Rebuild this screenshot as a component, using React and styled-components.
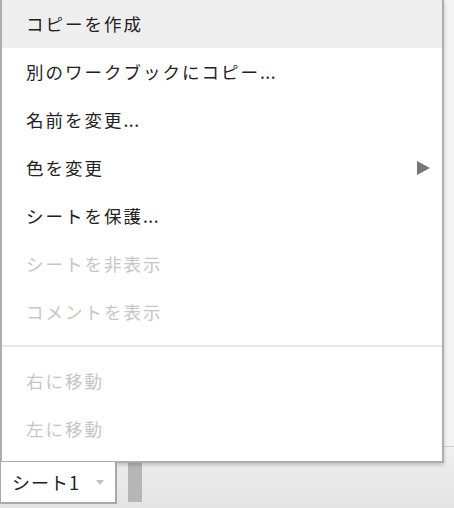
import React from "react";
import styled, { createGlobalStyle } from "styled-components";

const Global = createGlobalStyle`
  html, body { margin: 0; padding: 0; }
  body {
    width: 454px;
    height: 508px;
    overflow: hidden;
    background: #f2f2f2;
    font-family: "Noto Sans CJK JP", "Noto Sans", sans-serif;
  }
`;

const Page = styled.div`
  position: relative;
  width: 454px;
  height: 508px;
  display: flex;
  flex-direction: column;
`;

const Sheet = styled.div`
  flex: 1;
  background: #f3f3f3;
`;

const BottomBar = styled.div`
  height: 62px;
  border-top: 1px solid #cfcfcf;
  background: linear-gradient(#f0f0f0, #e3e3e3);
  display: flex;
  align-items: flex-end;
  gap: 11px;
  padding-bottom: 4px;
  box-sizing: border-box;
`;

const Tab = styled.div`
  position: relative;
  z-index: 3;
  width: 117px;
  height: 42px;
  background: #fff;
  border: 2px solid #a9a9a9;
  border-top: none;
  border-left-width: 1px;
  display: flex;
  align-items: center;
  padding-left: 11px;
  box-sizing: border-box;
  font-size: 18px;
  letter-spacing: 1px;
  color: #222;
  gap: 16px;
`;

const TabArrow = styled.span`
  width: 0;
  height: 0;
  border-left: 4px solid transparent;
  border-right: 4px solid transparent;
  border-top: 5px solid #c2c2c2;
`;

const Thumb = styled.div`
  width: 14px;
  height: 39px;
  margin-bottom: 2px;
  background: #b6b6b6;
`;

const Menu = styled.div`
  position: absolute;
  z-index: 2;
  left: 0;
  top: 0;
  width: 444px;
  box-sizing: border-box;
  background: #fff;
  border: 2px solid #adadad;
  border-top: none;
  box-shadow: 0 2px 4px rgba(0, 0, 0, 0.2);
  padding-bottom: 8px;
`;

const Item = styled.div`
  height: 48px;
  display: flex;
  align-items: center;
  justify-content: space-between;
  padding: 0 12px 2px 24px;
  box-sizing: border-box;
  font-size: 17.5px;
  letter-spacing: 2px;
  color: ${(p) => (p.$disabled ? "#c6c6c6" : "#222")};
  background: ${(p) => (p.$active ? "#eeeeee" : "transparent")};
`;

const Dots = styled.span`
  letter-spacing: 0.5px;
`;

const SubArrow = styled.span`
  width: 0;
  height: 0;
  margin-top: 2px;
  border-top: 7px solid transparent;
  border-bottom: 7px solid transparent;
  border-left: 13px solid #777;
`;

const Separator = styled.div`
  height: 2px;
  background: #e6e6e6;
  margin: 9px 0 10px;
`;

export default function App() {
  return (
    <Page>
      <Global />
      <Sheet />
      <BottomBar>
        <Tab>
          シート1
          <TabArrow />
        </Tab>
        <Thumb />
      </BottomBar>
      <Menu>
        <Item $active>コピーを作成</Item>
        <Item>
          <span>
            別のワークブックにコピー<Dots>...</Dots>
          </span>
        </Item>
        <Item>
          <span>
            名前を変更<Dots>...</Dots>
          </span>
        </Item>
        <Item>
          色を変更
          <SubArrow />
        </Item>
        <Item>
          <span>
            シートを保護<Dots>...</Dots>
          </span>
        </Item>
        <Item $disabled>シートを非表示</Item>
        <Item $disabled>コメントを表示</Item>
        <Separator />
        <Item $disabled>右に移動</Item>
        <Item $disabled>左に移動</Item>
      </Menu>
    </Page>
  );
}
